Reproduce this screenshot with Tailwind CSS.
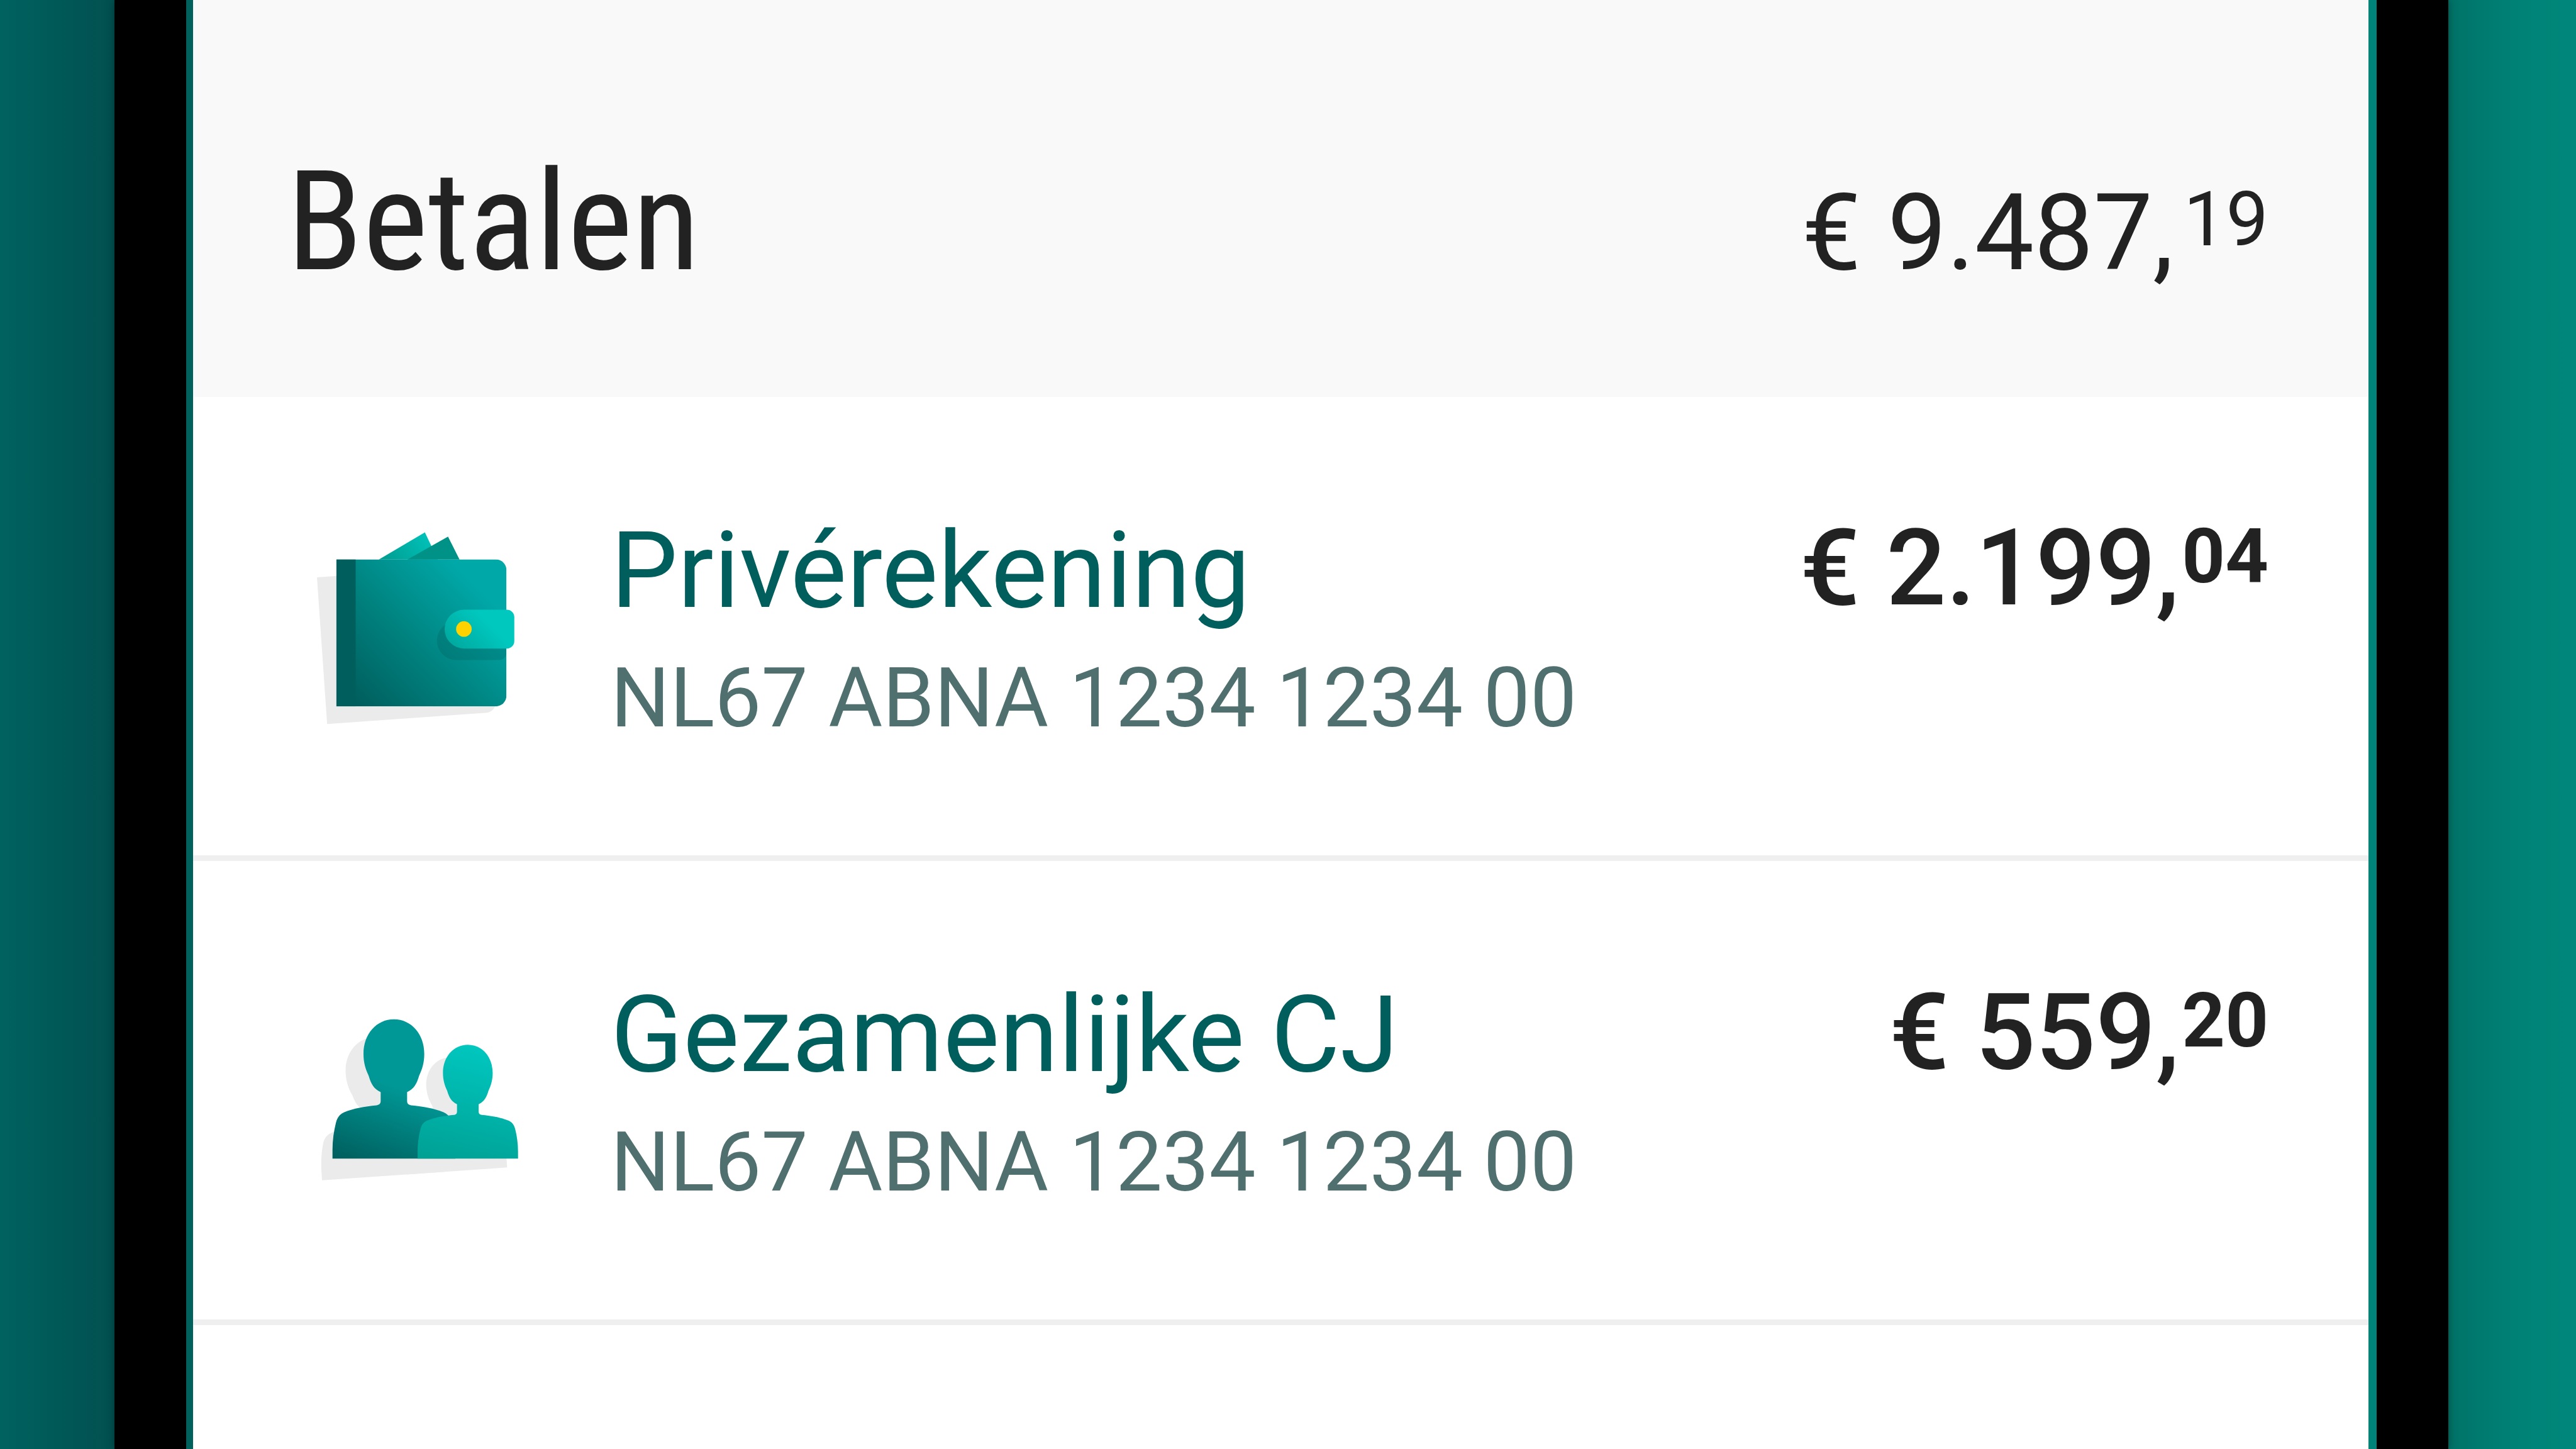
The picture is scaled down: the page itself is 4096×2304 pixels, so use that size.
<!DOCTYPE html>
<html lang="nl">
  <head>
    <meta charset="UTF-8" />
    <meta name="viewport" content="width=device-width, initial-scale=1.0" />
    <title>Betalen</title>
    <script src="https://cdn.jsdelivr.net/npm/@tailwindcss/browser@4"></script>
  </head>
  <body class="font-[Roboto,sans-serif] text-[#222222]">
    <div class="min-h-screen flex">
      <div class="w-[182px] bg-linear-to-r from-[#00625f] via-[#005957] to-[#025050]"></div>
      <!-- phone bezel -->
      <div class="relative flex-1 flex border-x-[114px] border-black shadow-[0_0_12px_rgba(0,0,0,0.35)]">
        <div class="w-[11px] bg-[#00615d]"></div>
        <main class="flex-1 bg-white">
          <header class="h-[631px] bg-[#f9f9f9] pt-[223px] pl-[149px] pr-[159px] flex justify-between items-baseline">
            <h1 class="font-['Roboto_Condensed',Roboto,sans-serif] text-[221px] leading-[260px]">Betalen</h1>
            <p class="text-[168px] leading-[208px] whitespace-nowrap">€ 9.487,<sup class="ml-4 text-[120px] leading-none align-baseline relative -top-[38px]">19</sup></p>
          </header>
          <ul>
            <li class="h-[738px] border-b-9 border-[#efefef] pt-[169px] pl-[149px] pr-[159px] flex">
              <svg class="shrink-0 w-[363px] h-[352px] mt-[21px] ml-6 mr-32" viewBox="0 0 680 660" aria-hidden="true">
                <defs>
                  <linearGradient id="wallet" gradientUnits="userSpaceOnUse" x1="160" y1="560" x2="517" y2="203">
                    <stop offset="0" stop-color="#005e5d" />
                    <stop offset="0.5" stop-color="#008380" />
                    <stop offset="1" stop-color="#00a8a8" />
                  </linearGradient>
                  <linearGradient id="clasp" gradientUnits="userSpaceOnUse" x1="445" y1="385" x2="535" y2="295">
                    <stop offset="0" stop-color="#00a99f" />
                    <stop offset="1" stop-color="#00c8bf" />
                  </linearGradient>
                  <linearGradient id="card" gradientUnits="userSpaceOnUse" x1="260" y1="135" x2="365" y2="60">
                    <stop offset="0" stop-color="#00a094" />
                    <stop offset="1" stop-color="#00bfb6" />
                  </linearGradient>
                  <clipPath id="wallet-shape">
                    <path d="M102.3 128.4H577.7A32 32 0 0 1 609.7 160.4V534.5A32 32 0 0 1 577.7 566.5H102.3Z" />
                  </clipPath>
                </defs>
                <path fill="#ebebeb" d="M44.7 181.8 400 157 578 560C574 576 562 585 546.4 585.9L75 619Z" />
                <path fill="url(#card)" d="M229 129 366.4 48 405 129Z" />
                <path fill="#009286" d="M314 129 435.4 60.6 469.8 129Z" />
                <g clip-path="url(#wallet-shape)">
                  <path fill="url(#wallet)" d="M102 128H610V567H102Z" />
                  <path fill="#005e5d" d="M102 128H160V567H102Z" />
                  <path fill="#005e5d" fill-opacity="0.28" d="M460 313.1H588A22 22 0 0 1 610 335.1V406.5A22 22 0 0 1 588 428.5H460A57.7 57.7 0 0 1 460 313.1Z" />
                </g>
                <path fill="url(#clasp)" d="M483 278.6H611A22 22 0 0 1 633 300.6V372A22 22 0 0 1 611 394H483A57.7 57.7 0 0 1 483 278.6Z" />
                <circle fill="#ffd200" cx="482.7" cy="336" r="23.2" />
              </svg>
              <div class="flex-1">
                <h2 class="text-[169px] leading-[214px] text-[#005e5d]">Privérekening</h2>
                <p class="text-[132px] leading-[192px] text-[#507070]">NL67 ABNA 1234 1234 00</p>
              </div>
              <p class="font-medium text-[168px] leading-[208px] whitespace-nowrap">€ 2.199,<sup class="ml-1 font-bold text-[120px] leading-none align-baseline relative -top-[35px]">04</sup></p>
            </li>
            <li class="h-[738px] border-b-9 border-[#efefef] pt-[169px] pl-[149px] pr-[159px] flex">
              <svg class="shrink-0 w-[363px] h-[352px] mt-[21px] ml-6 mr-32" viewBox="0 -56 680 660" aria-hidden="true">
                <defs>
                  <linearGradient id="person-dark" gradientUnits="userSpaceOnUse" x1="110" y1="480" x2="200" y2="230">
                    <stop offset="0" stop-color="#005e5d" />
                    <stop offset="1" stop-color="#009896" />
                  </linearGradient>
                  <linearGradient id="person-light" gradientUnits="userSpaceOnUse" x1="180" y1="480" x2="280" y2="60">
                    <stop offset="0" stop-color="#00a195" />
                    <stop offset="1" stop-color="#00c7bf" />
                  </linearGradient>
                  <path id="person" d="M274 60C222 60 183.4 104 183.4 163C183.4 190 190 210 198.6 227.5C206 253 215 268 234.6 276.7V303C234.6 311 231 314.5 223 316C185 320 155 325 126 336.6C113 342 105 352 101 369C95 393 91 420 91 449V475H457V449C457 420 453 393 447 369C443 352 435 342 422 336.6C393 325 363 320 325 316C317 314.5 313.4 311 313.4 303V276.7C333 268 342 253 349.4 227.5C358 210 364.6 190 364.6 163C364.6 104 326 60 274 60Z" />
                </defs>
                <g fill="#ebebeb" transform="translate(-64 72.5) rotate(-4)">
                  <use href="#person" />
                  <use href="#person" transform="translate(270.3 86.5) scale(0.818)" />
                </g>
                <use href="#person" fill="url(#person-dark)" />
                <use href="#person" fill="url(#person-light)" transform="translate(270.3 86.5) scale(0.818)" />
              </svg>
              <div class="flex-1">
                <h2 class="text-[169px] leading-[214px] text-[#005e5d]">Gezamenlijke CJ</h2>
                <p class="text-[132px] leading-[192px] text-[#507070]">NL67 ABNA 1234 1234 00</p>
              </div>
              <p class="font-medium text-[168px] leading-[208px] whitespace-nowrap">€ 559,<sup class="ml-1 font-bold text-[120px] leading-none align-baseline relative -top-[35px]">20</sup></p>
            </li>
          </ul>
        </main>
        <div class="w-[13px] bg-[#008378]"></div>
      </div>
      <div class="w-[203px] bg-linear-to-r from-[#007267] via-[#008176] to-[#00877b]"></div>
    </div>
  </body>
</html>
